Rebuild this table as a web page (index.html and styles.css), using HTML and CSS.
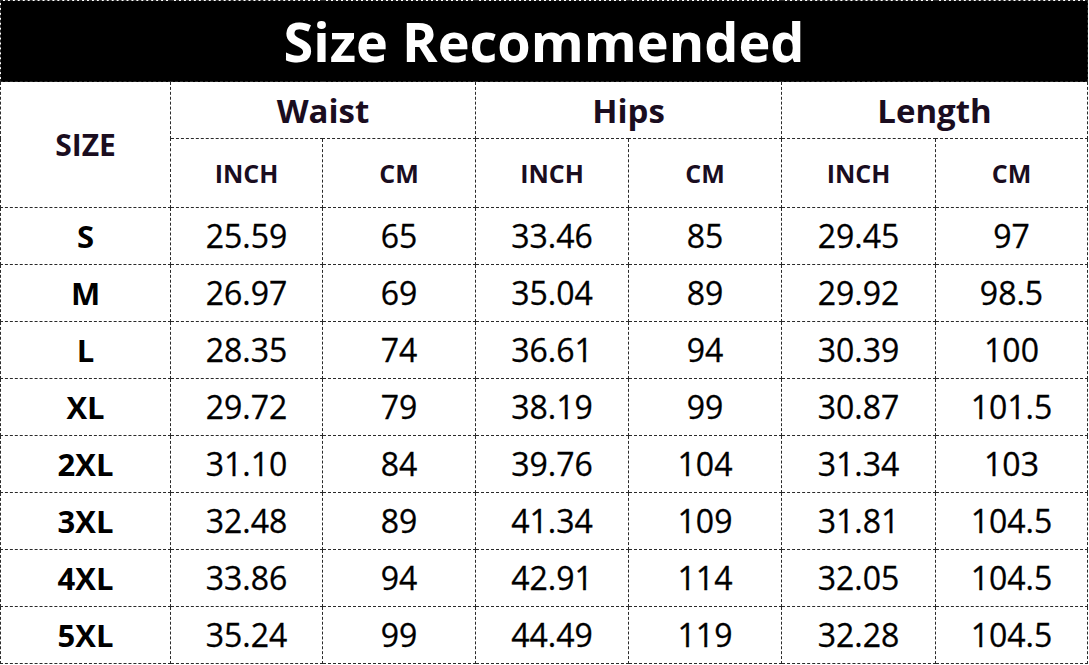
FILE: index.html
```html
<!DOCTYPE html>
<html>
<head>
<meta charset="utf-8">
<link rel="stylesheet" href="styles.css">
</head>
<body>
<table class="chart">
  <colgroup>
    <col class="c-size">
    <col class="c-152">
    <col class="c-153">
    <col class="c-153">
    <col class="c-153">
    <col class="c-154">
    <col class="c-152">
  </colgroup>
  <thead>
    <tr class="r-title"><th colspan="7" class="title">Size Recommended</th></tr>
    <tr class="r-group">
      <th rowspan="2" class="size-head">SIZE</th>
      <th colspan="2" class="group">Waist</th>
      <th colspan="2" class="group">Hips</th>
      <th colspan="2" class="group">Length</th>
    </tr>
    <tr class="r-unit">
      <th class="unit">INCH</th><th class="unit">CM</th>
      <th class="unit">INCH</th><th class="unit">CM</th>
      <th class="unit">INCH</th><th class="unit">CM</th>
    </tr>
  </thead>
  <tbody>
    <tr><th class="label">S</th><td>25.59</td><td>65</td><td>33.46</td><td>85</td><td>29.45</td><td>97</td></tr>
    <tr><th class="label">M</th><td>26.97</td><td>69</td><td>35.04</td><td>89</td><td>29.92</td><td>98.5</td></tr>
    <tr><th class="label">L</th><td>28.35</td><td>74</td><td>36.61</td><td>94</td><td>30.39</td><td>100</td></tr>
    <tr><th class="label">XL</th><td>29.72</td><td>79</td><td>38.19</td><td>99</td><td>30.87</td><td>101.5</td></tr>
    <tr><th class="label">2XL</th><td>31.10</td><td>84</td><td>39.76</td><td>104</td><td>31.34</td><td>103</td></tr>
    <tr><th class="label">3XL</th><td>32.48</td><td>89</td><td>41.34</td><td>109</td><td>31.81</td><td>104.5</td></tr>
    <tr><th class="label">4XL</th><td>33.86</td><td>94</td><td>42.91</td><td>114</td><td>32.05</td><td>104.5</td></tr>
    <tr><th class="label">5XL</th><td>35.24</td><td>99</td><td>44.49</td><td>119</td><td>32.28</td><td>104.5</td></tr>
  </tbody>
</table>
</body>
</html>
```

FILE: styles.css
```css
html, body {
  margin: 0;
  padding: 0;
  background: #ffffff;
}

.chart {
  border-collapse: collapse;
  table-layout: fixed;
  width: 1088px;
  font-family: "Open Sans", "Noto Sans", sans-serif;
  color: #000;
}

.c-size { width: 170px; }
.c-152 { width: 152px; }
.c-153 { width: 153px; }
.c-154 { width: 154px; }

.chart th,
.chart td {
  border: 1px dashed #2a2a2a;
  padding: 0;
  text-align: center;
  vertical-align: middle;
  line-height: 1;
}

.r-title { height: 81px; }
.r-group { height: 57px; }
.r-unit { height: 69px; }
.chart tbody tr { height: 57px; }

.title {
  background: #000;
  color: #fff;
  font-size: 54px;
  font-weight: 700;
  padding-bottom: 3px;
}

.size-head {
  font-size: 30px;
  font-weight: 700;
  color: #1a0d1f;
}

.group {
  font-size: 33px;
  font-weight: 700;
  color: #1a0d1f;
}

.unit {
  font-size: 25px;
  font-weight: 700;
  color: #1a0d1f;
}

.label {
  font-size: 31px;
  font-weight: 700;
}

.chart td {
  font-size: 32px;
  font-weight: 400;
  color: #000;
  -webkit-text-stroke: 0.3px #000;
}
```
